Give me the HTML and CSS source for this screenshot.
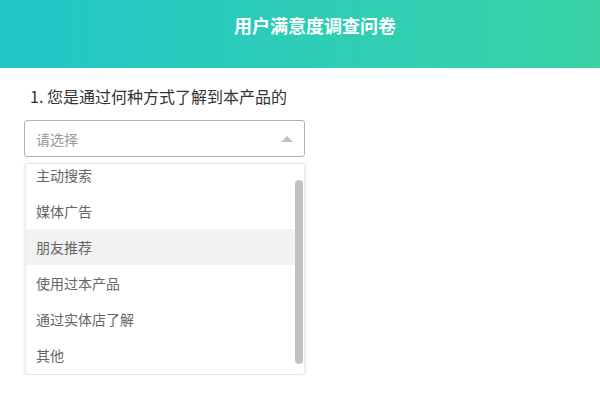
FILE: index.html
```html
<!DOCTYPE html>
<html lang="zh-CN">
<head>
<meta charset="UTF-8">
<meta name="viewport" content="width=device-width, initial-scale=1.0">
<title>用户满意度调查问卷</title>
<link rel="stylesheet" href="styles.css">
</head>
<body>
<header class="top-bar">
    <h1>用户满意度调查问卷</h1>
</header>

<!-- 第一题 -->
<div class="question">
    <p class="question-title">1. 您是通过何种方式了解到本产品的</p>

    <div class="select-box">
        <span class="placeholder">请选择</span>
        <span class="caret"></span>
    </div>

    <div class="dropdown">
        <ul class="options">
            <li>主动搜索</li>
            <li>媒体广告</li>
            <li class="hover">朋友推荐</li>
            <li>使用过本产品</li>
            <li>通过实体店了解</li>
            <li>其他</li>
        </ul>
        <div class="scroll-track">
            <div class="scroll-thumb"></div>
        </div>
    </div>
</div>
</body>
</html>
```

FILE: styles.css
```css
body {
    margin: 0;
    padding: 0;
    font-family: "Noto Sans CJK SC", "Noto Sans", sans-serif;
    background-color: #fff;
}

.top-bar {
    height: 68px;
    background: linear-gradient(90deg, #21c6c8, #39d3a6);
    padding: 12px 0 0 30px;
    box-sizing: border-box;
}

.top-bar h1 {
    margin: 0;
    font-size: 18px;
    line-height: 26px;
    color: #fff;
    font-weight: bold;
    text-align: center;
}

.question {
    padding: 0 0 0 24px;
}

.question-title {
    margin: 17px 0 0 6px;
    font-size: 16px;
    line-height: 22px;
    color: #333;
}

.select-box {
    margin-top: 13px;
    width: 281px;
    height: 37px;
    box-sizing: border-box;
    border: 1px solid #b3b3b3;
    border-radius: 3px;
    display: flex;
    align-items: center;
    justify-content: space-between;
    padding: 0 11px;
}

.placeholder {
    font-size: 14px;
    color: #999;
}

.caret {
    width: 0;
    height: 0;
    border-left: 6px solid transparent;
    border-right: 6px solid transparent;
    border-bottom: 6px solid #c0c0c0;
}

.dropdown {
    margin: 6px 0 0 1px;
    width: 280px;
    height: 212px;
    box-sizing: border-box;
    border: 1px solid #e8e8e8;
    border-radius: 2px;
    box-shadow: 0 1px 4px rgba(0, 0, 0, 0.12);
    display: flex;
    overflow: hidden;
}

.options {
    list-style: none;
    margin: -7px 0 0 0;
    padding: 0;
    flex: 1;
}

.options li {
    height: 36px;
    line-height: 36px;
    padding-left: 10px;
    font-size: 14px;
    color: #666;
}

.options li.hover {
    background-color: #f2f2f2;
}

.scroll-track {
    width: 8px;
    margin-right: 1px;
}

.scroll-thumb {
    margin-top: 16px;
    height: 184px;
    background-color: #c1c1c1;
    border-radius: 4px;
}
```
